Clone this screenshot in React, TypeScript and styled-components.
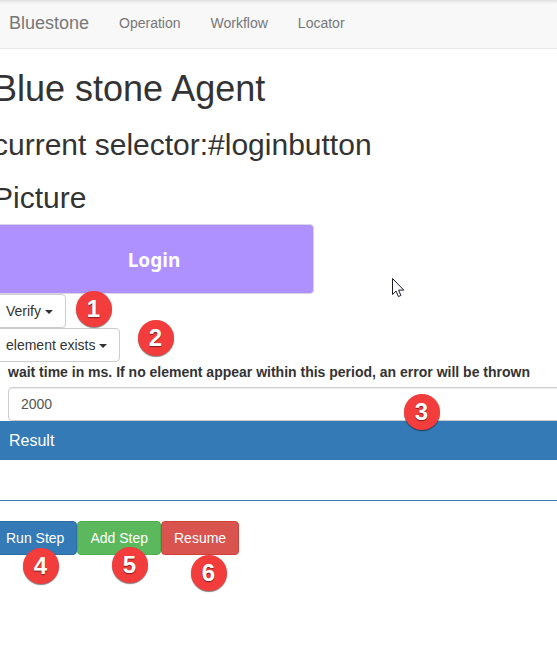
import React from "react";
import styled, { createGlobalStyle } from "styled-components";

const GlobalStyle = createGlobalStyle`
  *, *::before, *::after { box-sizing: border-box; }
  html, body { margin: 0; background: #fff; overflow: hidden; }
  body {
    font-family: "Liberation Sans", Arial, sans-serif;
    font-size: 14px;
    line-height: 20px;
    color: #333;
  }
`;

const Page = styled.div`
  position: relative;
  width: 100%;
  height: 656px;
  overflow: hidden;
`;

const Navbar = styled.nav`
  display: flex;
  align-items: center;
  height: 49px;
  padding: 0 0 2px 9px;
  border-bottom: 1px solid #e7e7e7;
  background: linear-gradient(#dedede, #eeeeee 2px, #f8f8f8 4px);
  color: #777;
`;

const Brand = styled.a`
  margin-right: 30px;
  font-size: 18px;
`;

const NavLink = styled.a`
  margin-right: 30px;
`;

const Content = styled.main`
  padding-top: 20px;
  margin-left: -7px;
`;

const Title = styled.h1`
  margin: 0 0 19px;
  font-size: 36px;
  font-weight: 400;
  line-height: 40px;
`;

const Subtitle = styled.h2<{ $gap: number }>`
  margin: 0 0 ${(p) => p.$gap}px;
  font-size: 30px;
  font-weight: 400;
  line-height: 33px;
`;

const Preview = styled.div`
  display: flex;
  align-items: center;
  justify-content: center;
  width: 321px;
  height: 70px;
  padding: 2px 0 0 1px;
  border: 1px solid #d9d3e6;
  border-radius: 4px;
  background: #ae91ff;
  color: #fff;
  font: 700 19px "Noto Sans", "Open Sans", sans-serif;
`;

const Row = styled.div`
  display: flex;
`;

const Button = styled.button<{ $bg?: string; $border?: string }>`
  display: flex;
  align-items: center;
  height: 34px;
  padding: 0 12px;
  border: 1px solid ${(p) => p.$border ?? "#ccc"};
  border-radius: 4px;
  background: ${(p) => p.$bg ?? "#fff"};
  color: ${(p) => (p.$bg ? "#fff" : "#333")};
  font: inherit;
  white-space: nowrap;
`;

const Caret = styled.span`
  margin: 1px 0 0 4px;
  border-top: 4px solid currentColor;
  border-left: 4px solid transparent;
  border-right: 4px solid transparent;
`;

const Field = styled.div`
  padding-left: 15px;
`;

const Label = styled.label`
  display: block;
  margin-bottom: 5px;
  font-weight: 700;
`;

const Input = styled.input`
  display: block;
  width: calc(100% + 20px);
  height: 34px;
  padding: 6px 12px;
  border: 1px solid #ccc;
  border-radius: 4px;
  box-shadow: inset 0 1px 1px rgba(0, 0, 0, 0.075);
  background: #fff;
  color: #555;
  font: inherit;
`;

const Panel = styled.section`
  height: 80px;
  margin-bottom: 20px;
  border-bottom: 1px solid #337ab7;
`;

const PanelTitle = styled.h3`
  height: 39px;
  margin: 0;
  padding: 0 16px;
  background: #337ab7;
  color: #fff;
  font-size: 16px;
  font-weight: 400;
  line-height: 39px;
`;

const Marker = styled.span<{ $x: number; $y: number }>`
  position: absolute;
  left: ${(p) => p.$x}px;
  top: ${(p) => p.$y}px;
  display: flex;
  align-items: center;
  justify-content: center;
  width: 36px;
  height: 36px;
  border-radius: 50%;
  background: #f33c3c;
  box-shadow: 0 1px 1px rgba(0, 0, 0, 0.5);
  color: #fff;
  font: 700 24px "Liberation Sans", Arial, sans-serif;
  text-shadow: 0 1px 1px rgba(0, 0, 0, 0.5);
`;

const Pointer = styled.svg`
  position: absolute;
  left: 392px;
  top: 277px;
`;

const markers = [
  { x: 75.5, y: 290.5 },
  { x: 137.5, y: 319.5 },
  { x: 403.5, y: 393.5 },
  { x: 22.5, y: 547.5 },
  { x: 111.5, y: 546.5 },
  { x: 190.5, y: 554.5 },
];

export default function App() {
  return (
    <Page>
      <GlobalStyle />
      <Navbar>
        <Brand>Bluestone</Brand>
        <NavLink>Operation</NavLink>
        <NavLink>Workflow</NavLink>
        <NavLink>Locator</NavLink>
      </Navbar>
      <Content>
        <Title>Blue stone Agent</Title>
        <Subtitle $gap={20}>current selector:#loginbutton</Subtitle>
        <Subtitle $gap={10}>Picture</Subtitle>
        <Preview>Login</Preview>
        <Row>
          <Button>
            Verify
            <Caret />
          </Button>
        </Row>
        <Row>
          <Button>
            element exists
            <Caret />
          </Button>
        </Row>
        <Field>
          <Label htmlFor="wait">
            wait time in ms. If no element appear within this period, an error will be thrown
          </Label>
          <Input id="wait" defaultValue="2000" />
        </Field>
        <Panel>
          <PanelTitle>Result</PanelTitle>
        </Panel>
        <Row>
          <Button $bg="#337ab7" $border="#2e6da4">Run Step</Button>
          <Button $bg="#5cb85c" $border="#4cae4c">Add Step</Button>
          <Button $bg="#d9534f" $border="#d43f3a">Resume</Button>
        </Row>
      </Content>
      {markers.map((m, i) => (
        <Marker key={i} $x={m.x} $y={m.y}>
          {i + 1}
        </Marker>
      ))}
      <Pointer width="14" height="22" viewBox="0 0 14 22">
        <path
          d="M.5 1.5v16l3.6-3.4 2.3 5.4 2.5-1-2.3-5.4h5.2z"
          fill="#fff"
          stroke="#1b1b2b"
          strokeWidth="1"
        />
      </Pointer>
    </Page>
  );
}
